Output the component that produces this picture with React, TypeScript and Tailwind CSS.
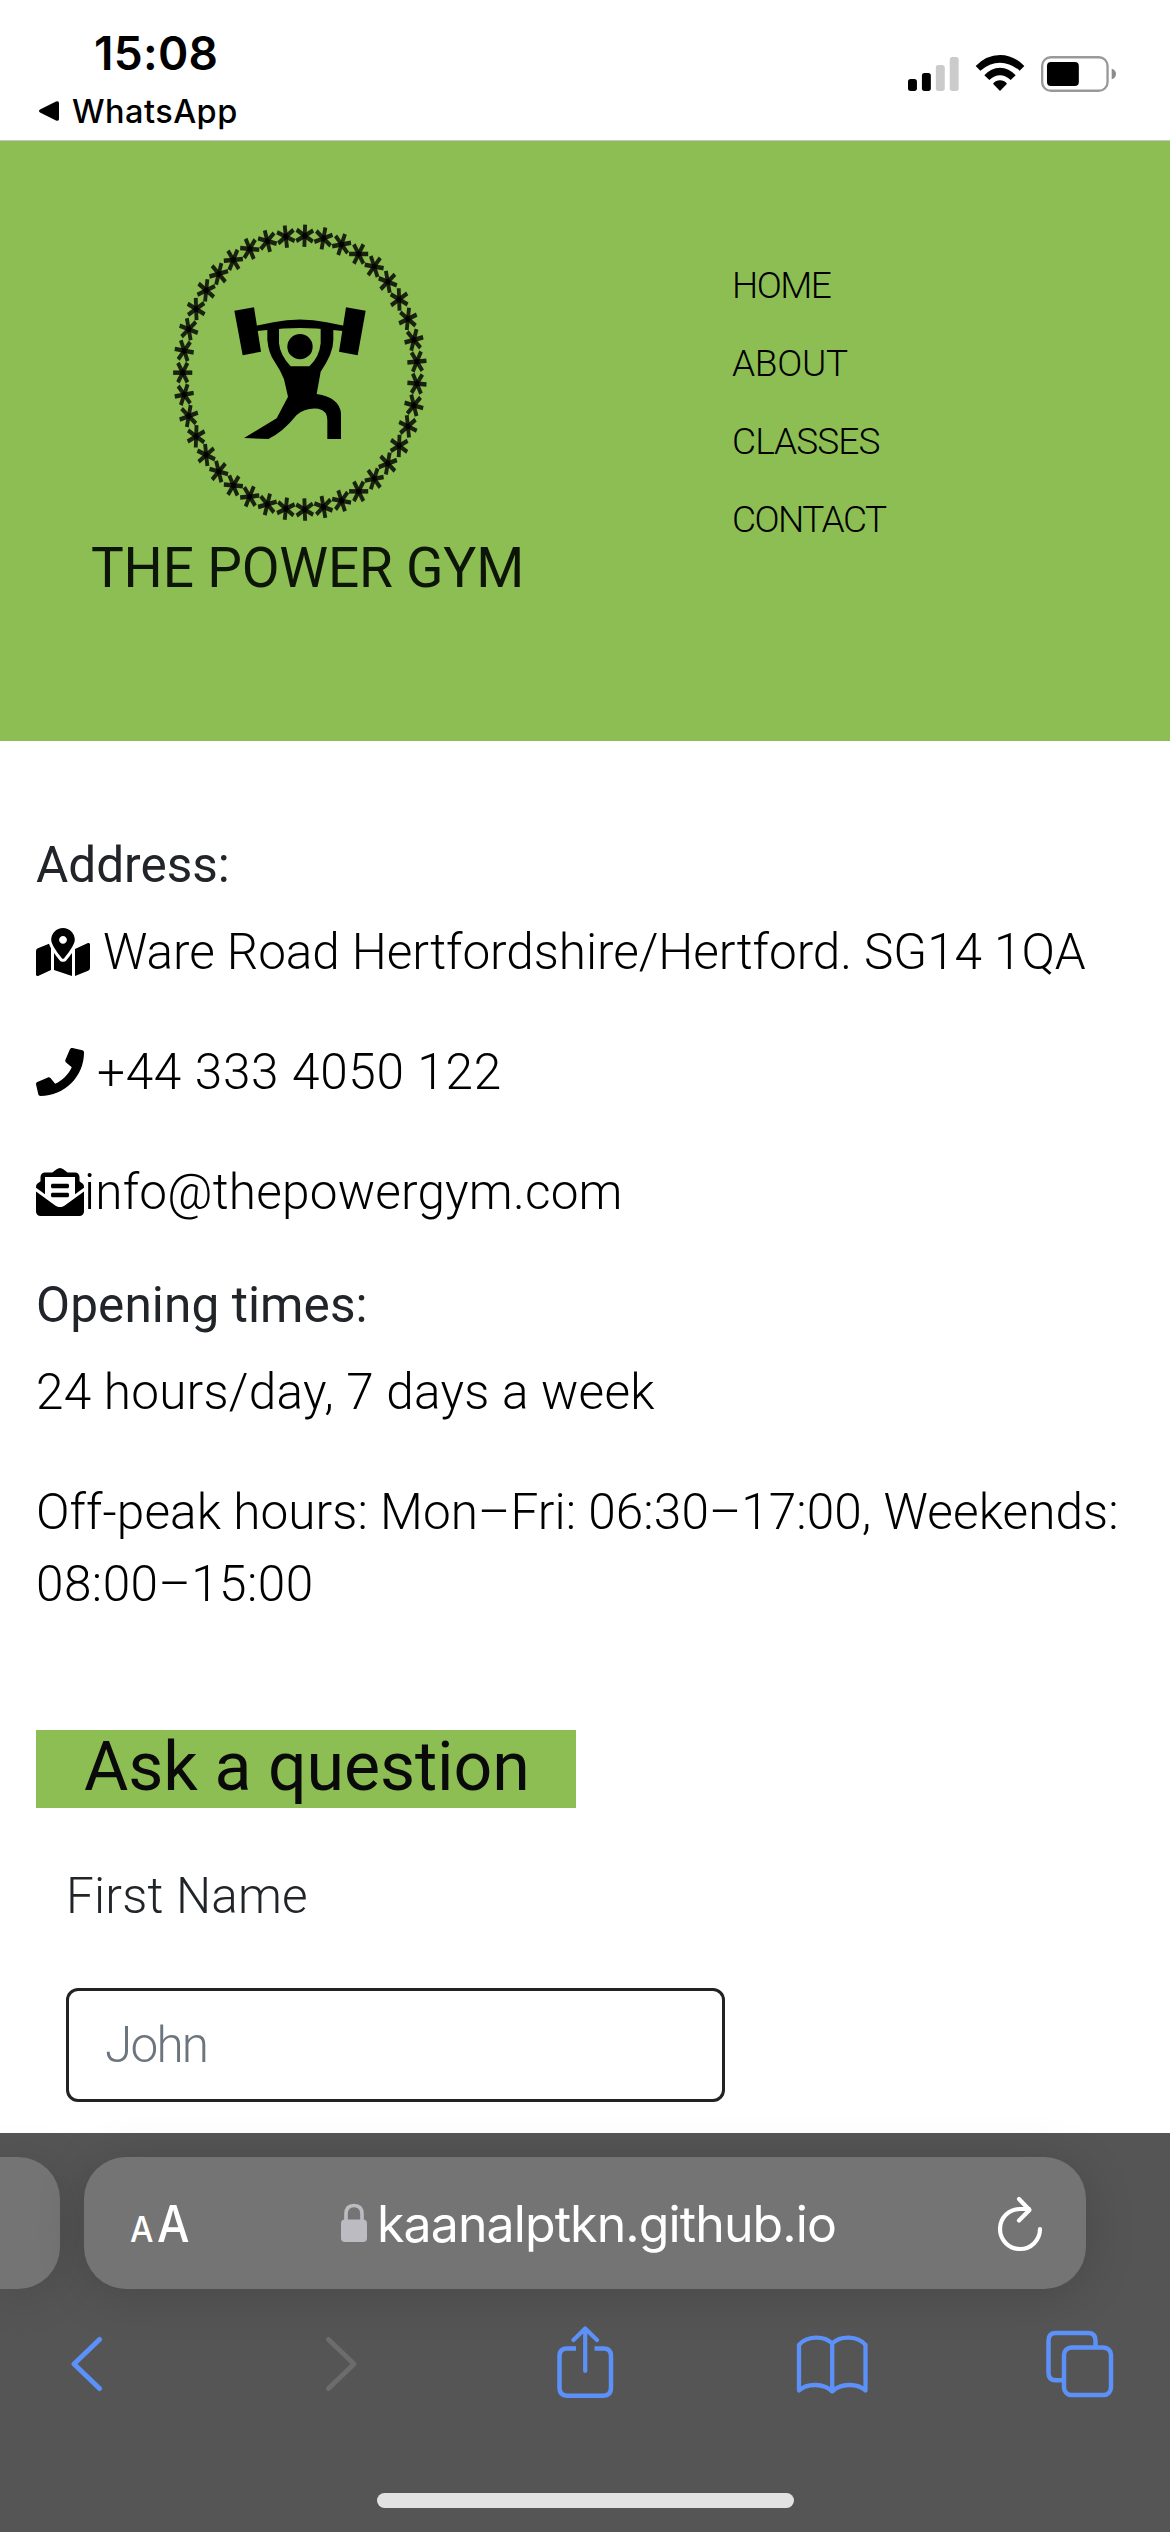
import type { ReactNode } from 'react';
import { FaMapMarkedAlt, FaPhone, FaEnvelopeOpenText } from 'react-icons/fa';

const STAR_COUNT = 39;
const stars = Array.from({ length: STAR_COUNT }, (_, i) => (360 / STAR_COUNT) * i);

function Logo() {
  return (
    <div className="w-[500px]">
      <svg viewBox="0 0 1500 1005" className="block h-[335px] w-[500px]">
        <g transform="translate(720 518) scale(0.926 1.082)" stroke="#000" strokeOpacity="0.82" strokeWidth="12.5">
          {stars.map((angle) => (
            <g key={angle} transform={`rotate(${angle}) translate(-380 0)`}>
              {[0, 60, 120].map((ray) => (
                <line key={ray} x1="-31" x2="31" y1="0" y2="0" transform={`rotate(${ray})`} />
              ))}
            </g>
          ))}
        </g>
        <path d="M523 332 582 322 603 455 548 466Z M917 332 858 322 837 455 893 466Z" />
        <path d="M588 377 640 367Q720 350 800 367L852 377 850 393 818 390Q720 378 622 390L590 393Z" />
        <path d="M622 386V420Q626 462 644 485 662 512 672 538L684 590 650 655 552 714 625 717Q668 697 710 645 735 622 775 626 802 632 802 660V717H843V640Q838 592 770 582L782 515Q820 460 820 420V386H782V430Q778 472 748 499H692Q660 465 657 430V386Z" />
        <circle cx="720" cy="440" r="38" />
      </svg>
      <div className="ml-[31px] whitespace-nowrap text-[55px] leading-[66px] tracking-[-0.2px] text-[#0d1408]">
        THE POWER GYM
      </div>
    </div>
  );
}

function StatusBar() {
  return (
    <div className="flex h-[141px] justify-between border-b border-[#c4c4c6] bg-white font-['Inter',sans-serif] text-black">
      <div className="pl-9">
        <div className="mt-[23px] pl-[58px] text-[46px] leading-[60px] font-semibold tracking-[0.3px]">15:08</div>
        <div className="mt-[8px] flex h-10 items-center">
          <svg viewBox="0 0 24 24" className="mr-[12px] h-6 w-6">
            <path d="M4 10.5 20 2.5Q23 1.5 23 4V20Q23 22.5 20 21.5L4 13.5Q2 12 4 10.5Z" />
          </svg>
          <span className="pt-px text-[32.5px] leading-10 font-medium tracking-[0.45px]">WhatsApp</span>
        </div>
      </div>
      <div className="mt-[55px] mr-[54px] flex h-[37px] gap-[16px]">
        <svg viewBox="141 105 154 111" className="h-[37px] w-[51px]">
          <rect x="141" y="177" width="27" height="36" rx="8" />
          <rect x="183" y="159" width="27" height="54" rx="8" />
          <rect x="225" y="135" width="27" height="78" rx="8" fill="#cbcbcb" />
          <rect x="267" y="111" width="27" height="102" rx="8" fill="#cbcbcb" />
        </svg>
        <svg viewBox="342 105 150 111" className="h-[37px] w-[50px]">
          <path d="M344 138Q376 105 417 105T490 138L476 152Q448 128 417 128T358 152Z" />
          <path d="M370 166Q390 143 417 143T464 166L449 180Q434 166 417 166T385 180Z" />
          <path d="M396 191Q405 181 417 181T438 191L417 213Z" />
        </svg>
        <svg viewBox="540 105 226 111" className="h-[37px] w-[75px]">
          <rect x="543.5" y="111.500" width="197" height="101" rx="26" fill="none" stroke="#999" strokeWidth="7" />
          <rect x="558" y="126" width="96" height="72" rx="12" />
          <path d="M753 146Q766 150 766 162T753 178Z" fill="#8c8c8c" />
        </svg>
      </div>
    </div>
  );
}

const navItems = [
  { label: 'HOME', tracking: 'tracking-[-1.5px]' },
  { label: 'ABOUT', tracking: 'tracking-[-0.3px]' },
  { label: 'CLASSES', tracking: 'tracking-[-0.9px]' },
  { label: 'CONTACT', tracking: 'tracking-[-1.5px]' },
];

function Header() {
  return (
    <header className="flex h-[600px] bg-[#8cbe53] pt-[59px] pl-[60px] text-black">
      <Logo />
      <nav className="mt-[47px] ml-[172px] text-[37px] leading-[78px] font-[350]">
        {navItems.map((item) => (
          <div key={item.label} className={item.tracking}>
            {item.label}
          </div>
        ))}
      </nav>
    </header>
  );
}

function Line({ children, className = '' }: { children: ReactNode; className?: string }) {
  return <p className={`mb-12 flex items-center whitespace-nowrap ${className}`}>{children}</p>;
}

function Contact() {
  return (
    <main className="h-[1392px] pt-[95px] pl-9 text-[49.5px] leading-[72px] font-[350] text-black">
      <h5 className="mb-[22px] leading-[58px] font-normal text-[#212529]">Address:</h5>
      <Line className="tracking-[-0.05px]">
        <FaMapMarkedAlt className="mr-[13px] h-12 w-[54px]" />
        Ware Road Hertfordshire/Hertford. SG14 1QA
      </Line>
      <Line className="tracking-[0.7px]">
        <FaPhone className="mr-[13px] size-12" />
        +44 333 4050 122
      </Line>
      <Line className="tracking-[0.2px]">
        <FaEnvelopeOpenText className="size-12" />
        info@thepowergym.com
      </Line>
      <h5 className="mb-[22px] leading-[58px] font-normal tracking-[0.1px] text-[#212529]">Opening times:</h5>
      <p className="mb-12 tracking-[0.25px]">24 hours/day, 7 days a week</p>
      <p>
        <span className="tracking-[0.08px]">Off-peak hours: Mon–Fri: 06:30–17:00, Weekends:</span>
        <br />
        <span className="tracking-[0.45px]">08:00–15:00</span>
      </p>
      <h2 className="mt-[110px] h-[78px] w-[540px] bg-[#8cbe53] pl-12 text-[68px] leading-[74px] font-normal tracking-[-0.1px] text-[#0a0a0a]">
        Ask a question
      </h2>
      <form className="pt-[52px] pl-[30px]">
        <label htmlFor="first-name" className="block tracking-[0.2px] text-[#212529]">
          First Name
        </label>
        <input
          id="first-name"
          placeholder="John"
          className="mt-14 block h-[114px] w-[659px] rounded-[12px] border-3 border-[#222] bg-white pl-9 tracking-[-1.8px] outline-none placeholder:text-[#6c757d]"
        />
      </form>
    </main>
  );
}

function BrowserBar() {
  return (
    <footer className="relative h-[399px] bg-[#555] pt-6 font-['Inter',sans-serif] text-white">
      <div className="flex gap-6">
        <div className="h-[132px] w-[60px] rounded-r-[42px] bg-[#747474] shadow-[0_6px_50px_rgba(0,0,0,0.13)]" />
        <div className="flex h-[132px] w-[1002px] items-center rounded-[42px] bg-[#747474] pl-[46px] shadow-[0_6px_50px_rgba(0,0,0,0.16)]">
          <div className="flex w-[62px] items-baseline gap-[3px] pt-[2px]">
            <span className="w-6 origin-left scale-x-92 text-[36px] font-medium">A</span>
            <span className="origin-left scale-x-90 text-[51px] font-[450]">A</span>
          </div>
          <svg viewBox="341 2204 26 40" className="ml-[149px] h-10 w-[26px]">
            <path d="M346 2223V2215Q346 2206.500 354 2206.500T362 2215V2223" fill="none" stroke="#bcbbc1" strokeWidth="3.600" />
            <rect x="341" y="2220.500" width="26" height="22.500" rx="4" fill="#bcbbc1" />
          </svg>
          <span className="ml-[10px] w-[458px] whitespace-nowrap pt-px text-[50px] leading-[60px] tracking-[-0.9px]">
            kaanalptkn.github.io
          </span>
          <svg
            viewBox="995 2190 50 60"
            className="ml-[160px] h-[60px] w-[50px]"
            fill="none"
            stroke="#fff"
            strokeWidth="4.200"
            strokeLinecap="round"
            strokeLinejoin="round"
          >
            <path d="M1040 2226A20 20 0 1 1 1020 2206H1029" />
            <path d="M1019 2196 1029.500 2207 1019 2217.500" />
          </svg>
        </div>
      </div>
      <div className="mt-[37px] flex pl-[71px] [&>svg]:h-[72px] [&>svg]:shrink-0">
        <svg viewBox="71 2326 32 72" className="w-8" fill="none" stroke="#5b91f8" strokeWidth="5" strokeLinecap="round" strokeLinejoin="round">
          <path d="M99.500 2339.500 74 2364 99.500 2388.500" />
        </svg>
        <svg viewBox="326 2326 32 72" className="ml-[223px] w-8" fill="none" stroke="#6c6c6c" strokeWidth="5" strokeLinecap="round" strokeLinejoin="round">
          <path d="M328.500 2339.500 354 2364 328.500 2388.500" />
        </svg>
        <svg viewBox="555 2326 60 72" className="ml-[197px] w-[60px]" fill="none" stroke="#5b91f8" strokeWidth="4.500" strokeLinejoin="round">
          <path d="M576 2348.500H567Q559.500 2348.500 559.500 2356V2388Q559.500 2395.700 567 2395.700H603.500Q611 2395.700 611 2388V2356Q611 2348.500 603.500 2348.500H594.500" />
          <path d="M585.200 2329V2371M573.500 2340 585.200 2328.500 597 2340" strokeLinecap="round" strokeWidth="4.200" />
        </svg>
        <svg viewBox="796 2326 72 72" className="ml-[181px] w-[72px]" fill="none" stroke="#5b91f8" strokeWidth="4.300" strokeLinecap="round" strokeLinejoin="round">
          <path d="M832.200 2343.500C824 2335.500 807 2335.500 799 2345V2390.500C807 2383 824 2383 832.200 2391.500C840.500 2383 857.500 2383 865.500 2390.500V2345C857.500 2335.500 840.500 2335.500 832.200 2343.500V2391" />
        </svg>
        <svg viewBox="1045 2326 70 72" className="ml-[177px] w-[70px]" fill="none" stroke="#5b91f8" strokeWidth="4.500">
          <rect x="1064" y="2347.500" width="47" height="47.500" rx="7.500" />
          <path d="M1064 2380.300H1056Q1048.500 2380.300 1048.500 2373V2340.500Q1048.500 2333 1056 2333H1088Q1095.500 2333 1095.500 2340.500V2347.500" />
        </svg>
      </div>
      <div className="mx-auto mt-[95px] h-[15px] w-[417px] rounded-full bg-[#e2e2e2]" />
    </footer>
  );
}

export default function App() {
  return (
    <div className="h-[2532px] w-[1170px] overflow-hidden bg-white font-['Roboto',sans-serif]">
      <StatusBar />
      <Header />
      <Contact />
      <BrowserBar />
    </div>
  );
}
